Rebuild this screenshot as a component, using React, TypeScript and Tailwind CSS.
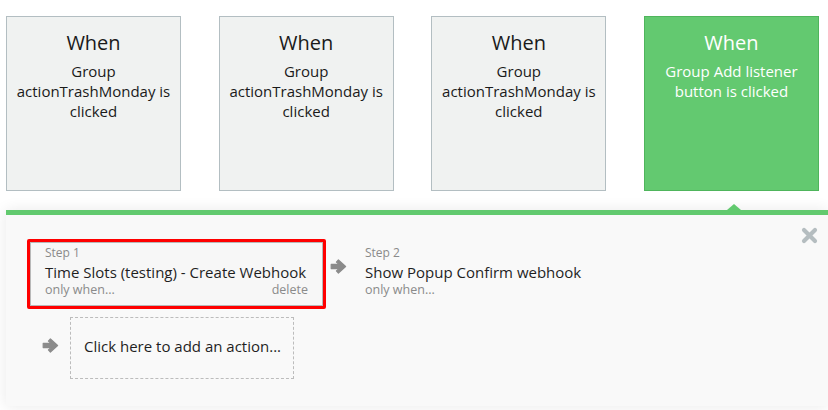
const CARDS = [
  { desc: 'Group actionTrashMonday is clicked', active: false },
  { desc: 'Group actionTrashMonday is clicked', active: false },
  { desc: 'Group actionTrashMonday is clicked', active: false },
  { desc: 'Group Add listener button is clicked', active: true },
];

function Arrow() {
  return (
    <svg width="17" height="15" viewBox="0 0 17 15" className="shrink-0 block">
      <path
        d="M8.4 1 L15.6 7.5 L8.4 14 L6.4 11.9 L9.2 9.6 L1.2 9.6 L1.2 5.4 L9.2 5.4 L6.4 3.1 Z"
        fill="#8b8b8b"
        stroke="#8b8b8b"
        strokeWidth="1.2"
        strokeLinejoin="round"
      />
    </svg>
  );
}

function CloseIcon() {
  return (
    <svg width="17" height="17" viewBox="0 0 17 17" className="block">
      <path
        d="M3 3 L14 14 M14 3 L3 14"
        stroke="#b5bdc0"
        strokeWidth="4.2"
        strokeLinecap="round"
      />
    </svg>
  );
}

function App() {
  return (
    <div
      className="w-[828px] h-[410px] bg-white overflow-hidden"
      style={{ fontFamily: '"Open Sans", sans-serif' }}
    >
      {/* EVENTS */}
      <div className="flex justify-between pl-[6px] pr-[9px] pt-[16px]">
        {CARDS.map((c, i) => (
          <div
            key={i}
            className={`w-[175px] h-[175px] border text-center pt-[12px] px-[4px] ${c.active
              ? 'bg-[#63c970] border-[#4fb55c] text-white'
              : 'bg-[#f0f2f1] border-[#b3bec2] text-[#1a1a1a]'
              }`}
          >
            <div className="text-[20px] leading-[28px]">When</div>
            <div className={`text-[15px] leading-[20px] mt-[4px] ${c.active ? 'px-[14px]' : ''}`}>
              {c.desc}
            </div>
          </div>
        ))}
      </div>

      {/* ACTIONS PANEL */}
      <div className="relative ml-[6px] mt-[19px] h-[196px] bg-[#f9f9f9] border-t-[5px] border-[#62ca6f] shadow-[0_0_14px_rgba(0,0,0,0.09)]">
        <div className="absolute left-[721px] top-[-11px] w-0 h-0 border-l-[7px] border-r-[7px] border-b-[6px] border-l-transparent border-r-transparent border-b-[#62ca6f]" />
        <button className="absolute right-[10px] top-[12px]">
          <CloseIcon />
        </button>

        <div className="pl-[21px] pt-[24px]">
          <div className="flex items-start">
            <div className="w-[299px] h-[70px] border-[3px] border-[#ff0000] rounded-[2px]">
              <div className="h-full border border-[#b8b8b8] bg-[#f7f7f7] px-[14px] pt-[2px]">
                <div className="text-[12px] leading-[16px] text-[#8a8a8a]">Step 1</div>
                <div className="text-[15px] leading-[20px] text-[#1f1f1f] mt-[1px]">
                  Time Slots (testing) - Create Webhook
                </div>
                <div className="flex justify-between text-[12.5px] leading-[16px] text-[#8a8a8a]">
                  <span>only when...</span>
                  <span>delete</span>
                </div>
              </div>
            </div>
            <div className="ml-[4px] mt-[20px]">
              <Arrow />
            </div>
            <div className="pl-[18px] pt-[6px]">
              <div className="text-[12px] leading-[16px] text-[#8a8a8a]">Step 2</div>
              <div className="text-[15px] leading-[20px] text-[#1f1f1f] mt-[1px]">
                Show Popup Confirm webhook
              </div>
              <div className="text-[12.5px] leading-[16px] text-[#8a8a8a]">only when...</div>
            </div>
          </div>

          <div className="flex items-start mt-[8px] ml-[15px]">
            <div className="mt-[21px]">
              <Arrow />
            </div>
            <div className="ml-[11px] w-[224px] h-[62px] border border-dashed border-[#bcbcbc] pl-[13px] pt-[18px] text-[15px] leading-[20px] text-[#1f1f1f]">
              Click here to add an action...
            </div>
          </div>
        </div>
      </div>
    </div>
  );
}

export default App;
